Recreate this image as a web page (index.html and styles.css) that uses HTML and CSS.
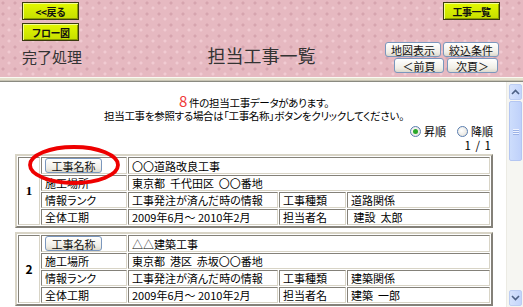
FILE: index.html
```html
<!DOCTYPE html>
<html lang="ja">
<head>
    <meta charset="UTF-8">
    <title>担当工事一覧</title>
    <link rel="stylesheet" href="styles.css">
</head>
<body>
    <header class="top">
        <div class="top-left">
            <button class="ybtn">&lt;&lt;戻る</button>
            <button class="ybtn">フロー図</button>
            <div class="proc">完了処理</div>
        </div>
        <h1 class="title">担当工事一覧</h1>
        <div class="top-right">
            <button class="ybtn">工事一覧</button>
            <div class="nav-row nav-row-1">
                <button class="gbtn w55">地図表示</button>
                <button class="gbtn w56">絞込条件</button>
            </div>
            <div class="nav-row nav-row-2">
                <button class="gbtn w49">＜前頁</button>
                <button class="gbtn w50">次頁＞</button>
            </div>
        </div>
    </header>
    <div class="rule"></div>

    <div class="main">
        <div class="content">
            <p class="msg"><span class="num">8</span>&nbsp;件の担当工事データがあります。</p>
            <p class="msg">担当工事を参照する場合は「工事名称」ボタンをクリックしてください。</p>

            <div class="sort">
                <label class="opt"><span class="radio on"></span>昇順</label>
                <label class="opt"><span class="radio"></span>降順</label>
            </div>
            <div class="pager">1 / 1</div>

            <div class="item">
                <table class="kouji">
                    <colgroup>
                        <col class="c-no"><col class="c-lbl"><col class="c-val"><col class="c-lbl2"><col class="c-val2">
                    </colgroup>
                    <tr>
                        <td class="no serif" rowspan="4">1</td>
                        <td><button class="gbtn name-btn">工事名称</button></td>
                        <td colspan="3">〇〇道路改良工事</td>
                    </tr>
                    <tr><td>施工場所</td><td colspan="3">東京都&nbsp; 千代田区&nbsp; 〇〇番地</td></tr>
                    <tr><td>情報ランク</td><td>工事発注が済んだ時の情報</td><td>工事種類</td><td>道路関係</td></tr>
                    <tr><td>全体工期</td><td>2009年6月～ 2010年2月</td><td>担当者名</td><td>&nbsp;建設&nbsp; 太郎</td></tr>
                </table>
                <svg class="mark" viewBox="0 0 92 40" width="92" height="40">
                    <ellipse cx="46" cy="20" rx="44" ry="18" fill="none" stroke="#ee0000" stroke-width="3.8"/>
                </svg>
            </div>

            <div class="item">
                <table class="kouji">
                    <colgroup>
                        <col class="c-no"><col class="c-lbl"><col class="c-val"><col class="c-lbl2"><col class="c-val2">
                    </colgroup>
                    <tr>
                        <td class="no" rowspan="4">2</td>
                        <td><button class="gbtn name-btn">工事名称</button></td>
                        <td colspan="3">△△建築工事</td>
                    </tr>
                    <tr><td>施工場所</td><td colspan="3">東京都&nbsp; 港区&nbsp; 赤坂〇〇番地</td></tr>
                    <tr><td>情報ランク</td><td>工事発注が済んだ時の情報</td><td>工事種類</td><td>建築関係</td></tr>
                    <tr><td>全体工期</td><td>2009年6月～ 2010年2月</td><td>担当者名</td><td>建築&nbsp; 一郎</td></tr>
                </table>
            </div>
        </div>

        <div class="scrollbar">
            <div class="sb-btn">
                <svg viewBox="0 0 9 6" width="9" height="6"><path d="M1 5 L4.5 1.5 L8 5" fill="none" stroke="#4d6185" stroke-width="1.6"/></svg>
            </div>
            <div class="sb-thumb"><span></span><span></span><span></span></div>
            <div class="sb-track"></div>
            <div class="sb-btn">
                <svg viewBox="0 0 9 6" width="9" height="6"><path d="M1 1 L4.5 4.5 L8 1" fill="none" stroke="#4d6185" stroke-width="1.6"/></svg>
            </div>
        </div>
    </div>
</body>
</html>
```

FILE: styles.css
```css
body{
    margin: 0;
    width: 523px;
    height: 307px;
    overflow: hidden;
    font-family: "Noto Sans CJK JP", sans-serif;
    font-feature-settings: "palt";
    font-size: 11px;
    color: #000;
}

/* cabecalho rosa */
.top{
    height: 77px;
    display: grid;
    grid-template-columns: 1fr auto 1fr;
    background-color: #e6b9c1;
    background-image:
        radial-gradient(circle at 3px 3px, #d6a4ae 1px, transparent 2px),
        radial-gradient(circle at 9px 8px, #f1cbd2 1px, transparent 2px);
    background-size: 12px 11px;
}
.top-left{
    padding: 2px 0 0 22px;
    display: flex;
    flex-direction: column;
    align-items: flex-start;
    gap: 3px;
}
.proc{
    margin-top: 3px;
    font-size: 15px;
    line-height: 20px;
    color: #333;
}
.title{
    margin: 43px 0 0;
    font-size: 18px;
    font-weight: normal;
    line-height: 24px;
    color: #333;
}
.top-right{
    padding: 2px 23px 0 0;
    display: flex;
    flex-direction: column;
    align-items: flex-end;
}
.nav-row{
    display: flex;
    gap: 2px;
    margin-right: 1px;
}
.nav-row-1{
    margin-top: 22px;
}
.nav-row-2{
    margin-top: 1px;
    margin-right: 2px;
    gap: 3px;
}

.ybtn{
    width: 57px;
    height: 18px;
    padding: 0;
    border: 1px solid #3a3a10;
    background: linear-gradient(#e4f800, #c6de00);
    box-shadow: inset 1px 1px #f4ff90, inset -1px -1px #8c9c00;
    font-family: inherit;
    font-size: 10px;
    font-weight: bold;
    letter-spacing: -0.5px;
    color: #111;
}

.gbtn{
    height: 15px;
    padding: 0;
    border: 1px solid #7b97bd;
    border-radius: 3px;
    background: linear-gradient(#ffffff, #f0eee6 70%, #dcd8cc);
    font-family: inherit;
    font-size: 11px;
    line-height: 12px;
    color: #111;
}
.w55{ width: 56px; }
.w56{ width: 56px; }
.w49{ width: 50px; }
.w50{ width: 51px; }

.rule{
    height: 5px;
    background: linear-gradient(#faf9f2 0 1px, #e4e0cc 1px 3px, #c8c4b4 3px 4px, #8a8a80 4px 5px);
}

/* area de conteudo */
.main{
    display: flex;
    height: 225px;
}
.content{
    flex: 1;
    overflow: hidden;
    padding: 11px 13px 0 15px;
    background: #fff;
}
.msg{
    margin: 0;
    height: 15px;
    text-align: center;
    font-size: 10.5px;
    letter-spacing: -0.3px;
    line-height: 15px;
}
.msg .num{
    color: #f03a3a;
    font-size: 15px;
    line-height: 15px;
}
.sort{
    margin-top: 1px;
    height: 14px;
    display: flex;
    justify-content: flex-end;
    gap: 11px;
    line-height: 14px;
}
.opt{
    display: flex;
    align-items: center;
    gap: 3px;
}
.radio{
    width: 9px;
    height: 9px;
    border: 1px solid #5a7eb0;
    border-radius: 50%;
    background: radial-gradient(circle at 40% 40%, #ffffff, #dedcd4);
    position: relative;
}
.radio.on::after{
    content: "";
    position: absolute;
    left: 2px;
    top: 2px;
    width: 5px;
    height: 5px;
    border-radius: 50%;
    background: #2aa82a;
}
.pager{
    height: 14px;
    text-align: right;
    font-size: 11.5px;
    line-height: 14px;
    letter-spacing: 1px;
    margin-right: 1px;
}

.item{
    position: relative;
    margin-top: 2px;
}
.item + .item{
    margin-top: 4px;
}
.kouji{
    width: 478px;
    table-layout: fixed;
    border-collapse: separate;
    border-spacing: 1px;
    border: 2px outset #d8d4c6;
}
.c-no{ width: 22px; }
.c-lbl{ width: 86px; }
.c-val{ width: 150px; }
.c-lbl2{ width: 67px; }
.c-val2{ width: 143px; }
.kouji td{
    height: 14px;
    padding: 0 3px;
    border: 1px inset #d8d4c6;
    white-space: nowrap;
    overflow: hidden;
    line-height: 14px;
}
.kouji tr:first-child td{
    height: 15px;
}
.kouji td.no{
    padding: 0;
    text-align: center;
    font-weight: bold;
    font-size: 12px;
}
.kouji td.serif{
    font-family: "Liberation Serif", serif;
    font-size: 13px;
}
.name-btn{
    width: 57px;
    height: 15px;
    display: block;
}

.mark{
    position: absolute;
    left: 13px;
    top: -9px;
}

/* barra de rolagem falsa */
.scrollbar{
    width: 17px;
    display: flex;
    flex-direction: column;
    padding: 2px 1px 1px 2px;
    box-sizing: border-box;
    background: #f6f6f2;
    border-left: 1px solid #ecebe4;
}
.sb-btn{
    height: 14px;
    border: 1px solid #bccdf2;
    border-radius: 2px;
    background: linear-gradient(90deg, #d6e2fc, #c4d5fb);
    display: flex;
    align-items: center;
    justify-content: center;
}
.sb-thumb{
    height: 58px;
    margin-top: 1px;
    border: 1px solid #b4c6f2;
    border-radius: 2px;
    background: linear-gradient(90deg, #cdddfc, #bfd1fa);
    display: flex;
    flex-direction: column;
    align-items: center;
    justify-content: center;
    gap: 1px;
}
.sb-thumb span{
    width: 6px;
    height: 1px;
    background: #eef3ff;
    box-shadow: 0 1px #9bb2e6;
}
.sb-track{
    flex: 1;
}
```
